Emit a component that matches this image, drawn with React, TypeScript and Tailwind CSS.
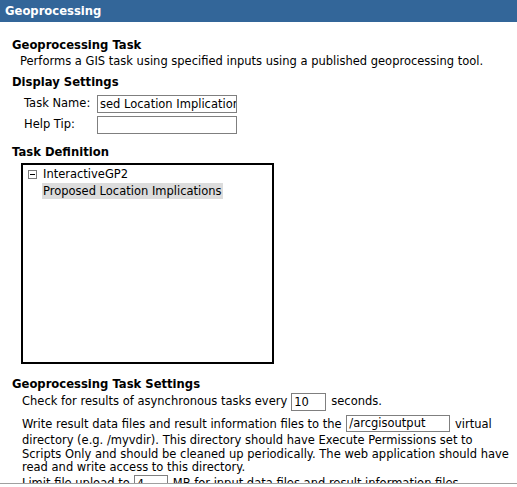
import React from 'react';

const font = { fontFamily: 'Verdana, "DejaVu Sans", sans-serif' };

function TextBox({ value = '', className = '' }: { value?: string; className?: string }) {
    return (
        <span
            className={`inline-block h-[18px] border border-[#7f7f7f] bg-white px-[2px] text-[11.5px] leading-[16px] text-black overflow-hidden whitespace-nowrap align-middle ${className}`}
        >
            {value}
        </span>
    );
}

export default function App() {
    return (
        <div className="w-[517px] h-[487px] bg-white text-black text-[11.5px]" style={font}>
            <div className="h-[484px] border-b border-[#a0a0a0] overflow-hidden">
                {/* title bar */}
                <div className="h-[22px] bg-[#336699] px-[5px] text-white font-bold text-[11.6px] leading-[22px]">
                    Geoprocessing
                </div>

                <div className="pl-[12px] pr-[4px] pt-[15px]">
                    {/* task */}
                    <div className="font-bold text-[11.6px] leading-[16px]">Geoprocessing Task</div>
                    <div className="pl-[8px] leading-[15px] mt-[1px]">
                        Performs a GIS task using specified inputs using a published geoprocessing tool.
                    </div>

                    {/* display settings */}
                    <div className="font-bold text-[11.6px] leading-[16px] mt-[5px]">Display Settings</div>
                    <div className="pl-[12px] mt-[5px] flex flex-col gap-[3px]">
                        <div className="flex items-center h-[18px]">
                            <span className="w-[73px] whitespace-nowrap">Task Name:</span>
                            <TextBox value="sed Location Implication" className="w-[140px]" />
                        </div>
                        <div className="flex items-center h-[18px]">
                            <span className="w-[73px]">Help Tip:</span>
                            <TextBox className="w-[140px]" />
                        </div>
                    </div>

                    {/* task definition */}
                    <div className="font-bold text-[11.6px] leading-[16px] mt-[10px]">Task Definition</div>
                    <div className="ml-[9px] mt-[3px] w-[253px] h-[201px] border-2 border-black pt-[1px] pl-[5px]">
                        <div className="flex items-center h-[17px]">
                            <svg width="9" height="9" viewBox="0 0 9 9" className="mr-[6px]">
                                <rect x="0.5" y="0.5" width="8" height="8" fill="#fff" stroke="#7a7a7a" />
                                <line x1="2" y1="4.5" x2="7" y2="4.5" stroke="#000" />
                            </svg>
                            <span>InteractiveGP2</span>
                        </div>
                        <div className="pl-[14px]">
                            <span className="inline-block bg-[#dcdcdc] leading-[16px] px-[1px]">
                                Proposed Location Implications
                            </span>
                        </div>
                    </div>

                    {/* settings */}
                    <div className="font-bold text-[11.6px] leading-[16px] mt-[12px]">Geoprocessing Task Settings</div>
                    <div className="pl-[10px]">
                        <div className="flex items-center h-[18px] mt-[1px]">
                            <span>Check for results of asynchronous tasks every</span>
                            <TextBox value="10" className="w-[35px] ml-[4px] mr-[5px]" />
                            <span>seconds.</span>
                        </div>
                        <div className="mt-[4px] leading-[13.5px]">
                            Write result data files and result information files to the{' '}
                            <TextBox value="/arcgisoutput" className="w-[104px] mx-[1px] mb-[2px] !h-[17px] !leading-[15px]" />{' '}
                            virtual directory (e.g. /myvdir). This directory should have Execute Permissions set to Scripts Only and should be cleaned up periodically. The web application should have read and write access to this directory.
                        </div>
                        <div className="flex items-center h-[18px]">
                            <span>Limit file upload to</span>
                            <TextBox value="4" className="w-[34px] ml-[4px] mr-[5px]" />
                            <span>MB for input data files and result information files.</span>
                        </div>
                    </div>
                </div>
            </div>
        </div>
    );
}
